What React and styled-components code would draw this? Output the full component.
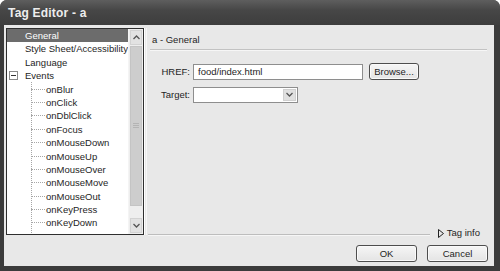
import React from 'react';
import styled, { createGlobalStyle } from 'styled-components';

const Global = createGlobalStyle`
  html, body {
    margin: 0;
    padding: 0;
    background: #ffffff;
  }
  * {
    box-sizing: border-box;
  }
`;

const Window = styled.div`
  width: 500px;
  height: 271px;
  background: #3b3b3b;
  border-radius: 7px 7px 0 0;
  display: flex;
  flex-direction: column;
  font-family: "Liberation Sans", Arial, sans-serif;
  font-size: 9.5px;
  color: #1e1e1e;
  overflow: hidden;
`;

const TitleBar = styled.div`
  height: 25px;
  flex: none;
  display: flex;
  align-items: center;
  padding-left: 8px;
  background: linear-gradient(#5e5e5e, #474747 40%, #3d3d3d);
  color: #ededed;
  font-size: 12px;
  font-weight: bold;
  letter-spacing: 0.2px;
`;

const Body = styled.div`
  flex: none;
  height: 241px;
  margin: 0 6px 0 4px;
  background: #e8e8e8;
  padding: 3px 6px 4px 2px;
  display: flex;
  flex-direction: column;
`;

const Main = styled.div`
  height: 207px;
  display: flex;
  gap: 2px;
`;

const ListBox = styled.div`
  width: 138px;
  border: 1px solid #2e2e2e;
  box-shadow: 1px 0 0 #ffffff;
  background: #ffffff;
  display: flex;
`;

const Tree = styled.div`
  flex: 1;
  position: relative;
  overflow: hidden;
`;

const Row = styled.div`
  height: 13.4px;
  line-height: 13.4px;
  padding-left: ${p => (p.$child ? 39 : 18)}px;
  position: relative;
  white-space: nowrap;
  background: ${p => (p.$selected ? '#6c6c6c' : 'transparent')};
  color: ${p => (p.$selected ? '#ffffff' : '#1e1e1e')};
`;

const Branch = styled.span`
  position: absolute;
  left: 24px;
  top: 6px;
  width: 14px;
  border-top: 1px dotted #a6a6a6;
`;

const Trunk = styled.span`
  position: absolute;
  left: 24px;
  top: 53px;
  bottom: 1px;
  border-left: 1px dotted #a6a6a6;
`;

const Toggle = styled.span`
  position: absolute;
  left: 2px;
  top: 2px;
  width: 9px;
  height: 9px;
  border: 1px solid #8a8a8a;
  background: #ffffff;
  &::after {
    content: '';
    position: absolute;
    left: 1px;
    right: 1px;
    top: 3px;
    height: 1px;
    background: #333333;
  }
`;

const ScrollBar = styled.div`
  width: 15px;
  background: #eeeeee;
  border-left: 1px solid #f4f4f4;
  display: flex;
  flex-direction: column;
`;

const ArrowButton = styled.div`
  height: 15px;
  margin: ${p => (p.$down ? '0 1px 1px' : '1px 1px 0')};
  border: 1px solid #d2d2d2;
  background: #e2e2e2;
  display: flex;
  align-items: center;
  justify-content: center;
`;

const Thumb = styled.div`
  height: 160px;
  margin: 1px 1px 0;
  background: #cdcdcd;
  border: 1px solid #c4c4c4;
  display: flex;
  align-items: center;
  justify-content: center;
`;

const Grip = styled.div`
  width: 6px;
  height: 6px;
  background: repeating-linear-gradient(#b4b4b4 0 1px, transparent 1px 2px);
`;

const Track = styled.div`
  flex: 1;
`;

const Panel = styled.div`
  flex: 1;
  display: flex;
  flex-direction: column;
  border-left: 1px solid #f6f6f6;
`;

const PanelHeader = styled.div`
  height: 22px;
  margin: 0 1px 0 3px;
  padding: 6px 0 0 2px;
  border-bottom: 1px solid #c2c2c2;
  box-shadow: 0 1px 0 #f6f6f6;
`;

const Form = styled.div`
  margin-top: 13px;
  display: flex;
  flex-direction: column;
  gap: 6px;
`;

const FormRow = styled.div`
  display: flex;
  align-items: center;
  height: 17px;
`;

const Label = styled.label`
  width: 43px;
  text-align: right;
  margin-right: 3px;
`;

const TextInput = styled.div`
  width: 170px;
  height: 16px;
  border: 1px solid #8e8e8e;
  background: #ffffff;
  padding-left: 4px;
  line-height: 14px;
`;

const Button = styled.div`
  width: ${p => p.$w}px;
  height: 17px;
  margin-left: ${p => p.$ml || 0}px;
  border: 1px solid #4e4e4e;
  border-radius: 3px;
  background: linear-gradient(#f6f6f6, #e4e4e4);
  box-shadow: inset 0 0 0 1px #fafafa;
  display: flex;
  align-items: center;
  justify-content: center;
`;

const Select = styled.div`
  width: 105px;
  height: 16px;
  border: 1px solid #8e8e8e;
  background: #ffffff;
  display: flex;
  justify-content: flex-end;
  padding: 1px;
`;

const SelectArrow = styled.div`
  width: 13px;
  background: #e0e0e0;
  border: 1px solid #d0d0d0;
  display: flex;
  align-items: center;
  justify-content: center;
`;

const Spacer = styled.div`
  flex: 1;
`;

const BottomRow = styled.div`
  height: 12px;
  margin-bottom: -4px;
  display: flex;
  align-items: flex-start;
  padding-right: 8px;
`;

const Rule = styled.div`
  flex: 1;
  margin: 7px 8px 0 1px;
  border-top: 1px solid #bdbdbd;
  box-shadow: 0 1px 0 #f6f6f6;
`;

const TagInfo = styled.div`
  display: flex;
  align-items: center;
  gap: 3px;
  line-height: 12px;
`;

const Footer = styled.div`
  margin-top: 10px;
  display: flex;
  justify-content: flex-end;
`;

function Chevron({ down }) {
  return (
    <svg width="7" height="5" viewBox="0 0 7 5">
      <polyline
        points={down ? '0.5,1 3.5,4 6.5,1' : '0.5,4 3.5,1 6.5,4'}
        fill="none"
        stroke="#555"
        strokeWidth="1.3"
      />
    </svg>
  );
}

const events = [
  'onBlur', 'onClick', 'onDblClick', 'onFocus', 'onMouseDown', 'onMouseUp',
  'onMouseOver', 'onMouseMove', 'onMouseOut', 'onKeyPress', 'onKeyDown',
];

export default function App() {
  return (
    <>
      <Global />
      <Window>
        <TitleBar>Tag Editor - a</TitleBar>
        <Body>
          <Main>
            <ListBox>
              <Tree>
                <Row $selected>General</Row>
                <Row>Style Sheet/Accessibility</Row>
                <Row>Language</Row>
                <Row><Toggle />Events</Row>
                <Trunk />
                {events.map(name => (
                  <Row key={name} $child><Branch />{name}</Row>
                ))}
              </Tree>
              <ScrollBar>
                <ArrowButton><Chevron /></ArrowButton>
                <Thumb><Grip /></Thumb>
                <Track />
                <ArrowButton $down><Chevron down /></ArrowButton>
              </ScrollBar>
            </ListBox>
            <Panel>
              <PanelHeader>a - General</PanelHeader>
              <Form>
                <FormRow>
                  <Label>HREF:</Label>
                  <TextInput>food/index.html</TextInput>
                  <Button $w={50} $ml={6}>Browse...</Button>
                </FormRow>
                <FormRow>
                  <Label>Target:</Label>
                  <Select>
                    <SelectArrow><Chevron down /></SelectArrow>
                  </Select>
                </FormRow>
              </Form>
              <Spacer />
              <BottomRow>
                <Rule />
                <TagInfo>
                  <svg width="6" height="9" viewBox="0 0 6 9">
                    <polygon points="0.5,0.5 5.5,4.5 0.5,8.5" fill="none" stroke="#222" strokeWidth="1" />
                  </svg>
                  Tag info
                </TagInfo>
              </BottomRow>
            </Panel>
          </Main>
          <Footer>
            <Button $w={61}>OK</Button>
            <Button $w={61} $ml={10}>Cancel</Button>
          </Footer>
        </Body>
      </Window>
    </>
  );
}
